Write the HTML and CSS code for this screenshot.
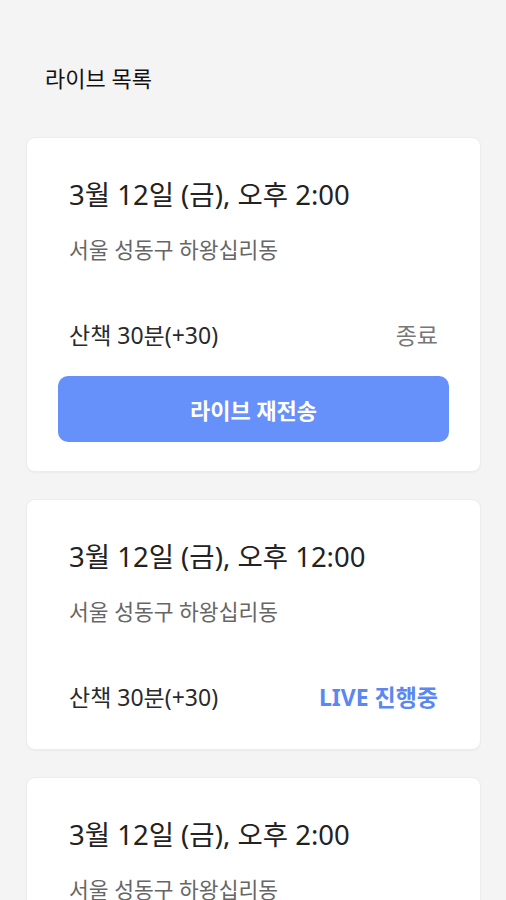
FILE: index.html
```html
<!DOCTYPE html>
<html lang="ko">
<head>
    <meta charset="UTF-8">
    <meta name="viewport" content="width=device-width, initial-scale=1.0">
    <title>라이브 목록</title>
    <link rel="stylesheet" href="styles.css">
</head>
<body>
    <div class="page">
        <h1 class="page-title">라이브 목록</h1>

        <div class="live-list">
            <div class="live-card">
                <div class="live-date">3월 12일 (금), 오후 2:00</div>
                <div class="live-place">서울 성동구 하왕십리동</div>
                <div class="live-row">
                    <span class="live-walk">산책 30분(+30)</span>
                    <span class="live-status ended">종료</span>
                </div>
                <button class="replay-btn">라이브 재전송</button>
            </div>

            <div class="live-card">
                <div class="live-date">3월 12일 (금), 오후 12:00</div>
                <div class="live-place">서울 성동구 하왕십리동</div>
                <div class="live-row">
                    <span class="live-walk">산책 30분(+30)</span>
                    <span class="live-status on-air">LIVE 진행중</span>
                </div>
            </div>

            <div class="live-card">
                <div class="live-date">3월 12일 (금), 오후 2:00</div>
                <div class="live-place">서울 성동구 하왕십리동</div>
                <div class="live-row">
                    <span class="live-walk">산책 30분(+30)</span>
                    <span class="live-status ended">종료</span>
                </div>
                <button class="replay-btn">라이브 재전송</button>
            </div>
        </div>
    </div>
</body>
</html>
```

FILE: styles.css
```css
* {
    box-sizing: border-box;
}
html, body {
    margin: 0;
    padding: 0;
    background: #f4f4f4;
}
body {
    font-family: "Noto Sans", "Noto Sans CJK KR", sans-serif;
    color: #222;
}
.page {
    padding: 63px 25px 40px 26px;
}
.page-title {
    margin: 0 0 44px 19px;
    font-size: 22px;
    line-height: 30px;
    font-weight: 400;
    color: #111;
}
.live-list {
    display: flex;
    flex-direction: column;
    gap: 27px;
}
.live-card {
    background: #fff;
    border: 1px solid #ececec;
    border-radius: 9px;
    box-shadow: 0 1px 2px rgba(0, 0, 0, 0.04);
    padding: 39px 31px 29px 31px;
}
.live-date {
    padding: 0 11px;
    font-size: 27.5px;
    line-height: 36px;
    color: #222;
}
.live-place {
    margin-top: 23px;
    padding: 0 11px;
    font-size: 21.5px;
    line-height: 28px;
    color: #666;
}
.live-row {
    display: flex;
    justify-content: space-between;
    align-items: center;
    margin-top: 55px;
    margin-bottom: 7px;
    padding: 0 11px;
    font-size: 23px;
    line-height: 32px;
}
.live-walk {
    color: #2a2a2a;
}
.live-status.ended {
    color: #777;
}
.live-status.on-air {
    color: #5b87f2;
    font-weight: 700;
}
.replay-btn {
    display: block;
    width: 100%;
    height: 66px;
    margin-top: 25px;
    border: none;
    border-radius: 10px;
    background: #6690fa;
    color: #fff;
    font-family: inherit;
    font-size: 22px;
    font-weight: 700;
    cursor: pointer;
}
```
